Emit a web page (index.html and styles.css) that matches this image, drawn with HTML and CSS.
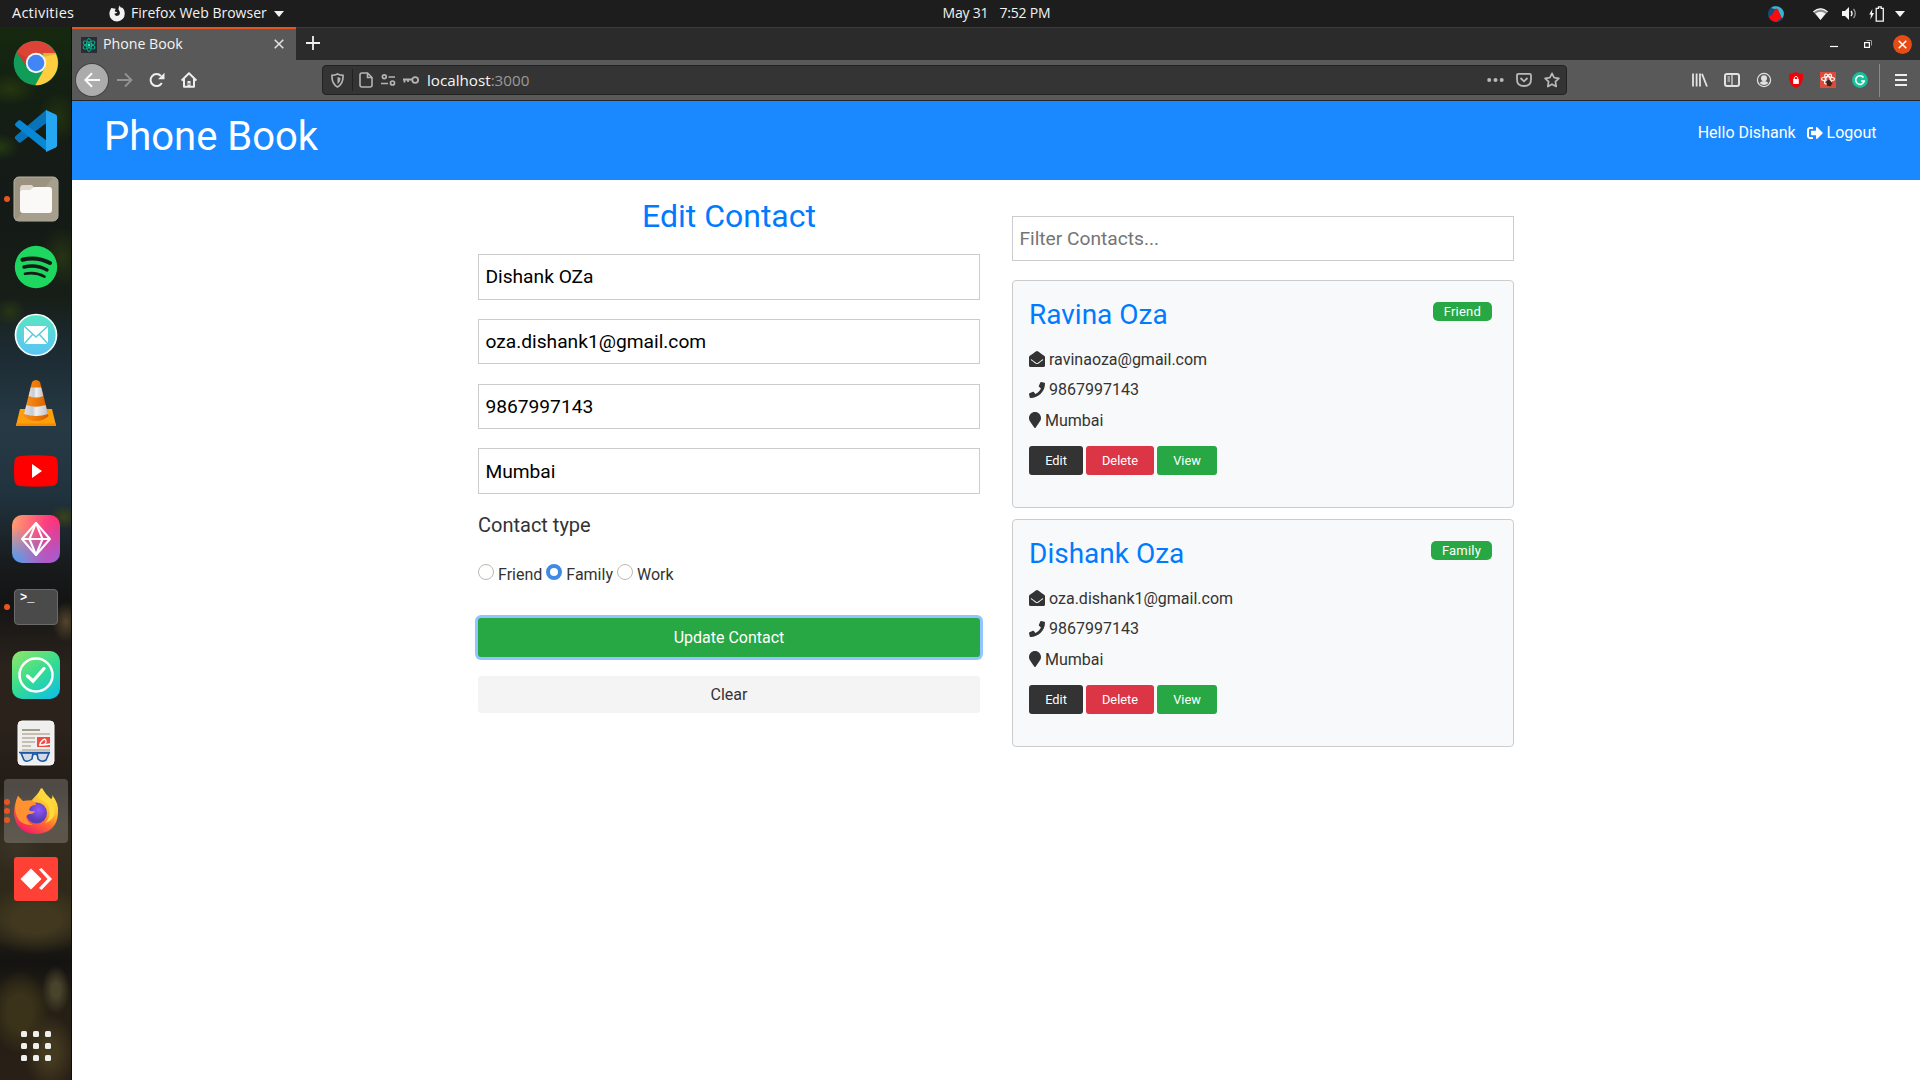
FILE: index.html
```html
<!DOCTYPE html>
<html lang="en">
<head>
<meta charset="utf-8">
<title>Phone Book</title>
<link rel="stylesheet" href="styles.css">
</head>
<body>
<svg class="defs" width="0" height="0" aria-hidden="true">
  <symbol id="i-mail" viewBox="0 0 512 512"><path d="M512 464c0 26.51-21.49 48-48 48H48c-26.51 0-48-21.49-48-48V200.724a48 48 0 0 1 18.387-37.776c24.913-19.529 45.501-35.365 164.2-121.511C199.412 29.17 232.797-.347 256 .003c23.198-.354 56.596 29.172 73.413 41.433 118.687 86.137 139.303 101.995 164.2 121.512A48 48 0 0 1 512 200.724V464zm-65.666-196.605c-2.563-3.728-7.7-4.595-11.339-1.907-22.845 16.873-55.462 40.705-105.582 77.079-16.825 12.266-50.21 41.781-73.413 41.43-23.211.344-56.559-29.143-73.413-41.43-50.114-36.37-82.734-60.204-105.582-77.079-3.639-2.688-8.776-1.821-11.339 1.907l-9.072 13.196a7.998 7.998 0 0 0 1.839 10.967c22.887 16.899 55.454 40.69 105.303 76.868 20.274 14.781 56.524 47.813 92.264 47.573 35.724.242 71.961-32.771 92.263-47.573 49.85-36.179 82.418-59.97 105.303-76.868a7.998 7.998 0 0 0 1.839-10.967l-9.071-13.196z"/></symbol>
  <symbol id="i-phone" viewBox="0 0 512 512"><path d="M493.4 24.6l-104-24c-11.3-2.6-22.9 3.3-27.5 13.9l-48 112c-4.2 9.8-1.4 21.3 6.9 28l60.6 49.6c-36 76.7-98.9 140.5-177.2 177.2l-49.6-60.6c-6.8-8.3-18.2-11.1-28-6.9l-112 48C3.9 366.5-2 378.1.6 389.4l24 104C27.1 504.2 36.7 512 48 512c256.1 0 464-207.5 464-464 0-11.2-7.7-20.9-18.6-23.4z"/></symbol>
  <symbol id="i-pin" viewBox="0 0 384 512"><path d="M172.268 501.67C26.97 291.031 0 269.413 0 192 0 85.961 85.961 0 192 0s192 85.961 192 192c0 77.413-26.97 99.031-172.268 309.67-9.535 13.774-29.93 13.773-39.464 0z"/></symbol>
</svg>

<div class="topbar">
  <div class="topbar-left">
    <span class="activities">Activities</span>
    <svg class="ff-mono" width="16" height="17" viewBox="0 0 16 17"><path fill="#f2f2f2" fill-rule="evenodd" d="M2.2 3.2c.9-.6 1.500.1 2.400.3C5.600 3.300 6.300 3.700 7 4c-1.300.8-1.500 2-.8 2.600.5.500 1.500.3 2 .8-.7 1-2 .8-2.700 1.400.3 1.600 1.700 2.400 3.100 2 1.800-.5 2.600-2 2.200-3.700-.3-1.300-1.400-1.800-1.300-3.200.1-1.300.6-2.500 1.300-3.300.3 1.400 1.100 2 1.600 2.700.2-.4.2-.9.1-1.300 2.200 1.500 3.200 3.900 3.200 6.300A7.600 7.600 0 0 1 8 16.500a7.600 7.600 0 0 1-7.600-7.700C.4 6.600 1.300 4.900 2.200 3.200z"/></svg>
    <span class="app-name">Firefox Web Browser</span>
    <svg width="10" height="6" viewBox="0 0 10 6"><path d="M0 0h10L5 6z" fill="#f2f2f2"/></svg>
  </div>
  <div class="clock"><span>May 31</span><span>7:52 PM</span></div>
  <div class="tray">
    <svg class="tray-app" width="16" height="16" viewBox="0 0 16 16"><circle cx="8" cy="8" r="8" fill="#174b78"/><path d="M3 2a8 8 0 0 1 12.800 4.500c.3 2.500-.5 4.500-1.800 6L10 4z" fill="#37b6ce"/><path d="M7.500 2.500c2-.2 3 1 3 2.500l2.500 5.500c.5 2-1 3-2.500 3.500L9 16c-3 0-6.500-1.500-8-5.500l3-1.500z" fill="#f90b10"/></svg>
    <svg class="wifi" width="15" height="12" viewBox="0 0 15 12"><path d="M0 3.400Q7.500-2.800 15 3.400L7.500 12z" fill="#8d8d8d"/><path d="M0 3.400Q7.500-2.800 15 3.400l-.7.8Q7.500-1 .7 4.200z" fill="#f5f5f5"/><path d="M2.400 5.600Q7.500 1.800 12.600 5.600L7.500 12z" fill="#f5f5f5"/></svg>
    <svg class="sound" width="15" height="13" viewBox="0 0 15 13"><path d="M0 4h3l4-4v13L3 9H0z" fill="#f5f5f5"/><path d="M9 4q2 2.500 0 5" fill="none" stroke="#f5f5f5" stroke-width="1.400"/><path d="M11.500 2q3.500 4.500 0 9" fill="none" stroke="#999" stroke-width="1.300"/></svg>
    <svg class="battery" width="15" height="16" viewBox="0 0 15 16"><path d="M7.200 2.300h2.300V.8h2.700v1.500h2.100v12.900H7.200z" fill="none" stroke="#f5f5f5" stroke-width="1.300"/><path d="M3.400 3L.2 8.600h1.800l-.6 4.800L5 7H3z" fill="#f5f5f5"/></svg>
    <svg width="10" height="6" viewBox="0 0 10 6"><path d="M0 0h10L5 6z" fill="#f2f2f2"/></svg>
  </div>
</div>

<div class="desktop">
  <nav class="dock">
    <div class="dock-item"><svg width="46" height="46" viewBox="0 0 46 46"><circle cx="23" cy="23" r="22.300" fill="#119d58"/><path d="M3.500 12A22.300 22.300 0 0 1 42.500 13H23a10 10 0 0 0-9.500 13z" fill="#dd4437"/><path d="M42.500 13A22.300 22.300 0 0 1 22.300 45.300L32 27.500 30 13z" fill="#ffcd40"/><path d="M4 12l10 16 2-9z" fill="#a52b22" opacity=".3"/><path d="M22 13h20.500l.6 1.300L30 17z" fill="#c58a2b" opacity=".4"/><circle cx="23" cy="23" r="10.200" fill="#f4f4f4"/><circle cx="23" cy="23" r="8.300" fill="#4286f5"/></svg></div>
    <div class="dock-item"><svg width="44" height="44" viewBox="0 0 44 44"><path d="M1 29.500l4.500 3.800L33 13.500V1z" fill="#0069b3"/><path d="M1 29.500q-.7-1.500.6-2.500L32 1v13L6.500 33.500q-1 .5-2-.3z" fill="#0873b8"/><path d="M1.300 14.500l3.200-3q1-.8 2 0L33 32v10.500L1.600 17q-1-1.200-.3-2.500z" fill="#0887d4"/><path d="M32 1l9.800 4.600q1.200.7 1.200 2v28.800q0 1.300-1.200 2L32 43z" fill="#25a7f1"/></svg></div>
    <div class="dock-item"><i class="run"></i><svg width="46" height="46" viewBox="0 0 46 46"><rect x="1" y="1" width="44" height="44" rx="5" fill="#9b927f" stroke="#b9b3a5"/><path d="M2 45L40 2h4v42z" fill="#a79f8d"/><path d="M7 13q0-4 3-4h9l3 4v6H7z" fill="#ded9ce"/><path d="M7 17q0-3 3-3h7l4-3h15q3 0 3 3v20q0 3-3 3H10q-3 0-3-3z" fill="#faf9f8"/></svg></div>
    <div class="dock-item"><svg width="44" height="44" viewBox="0 0 44 44"><circle cx="22" cy="22" r="21.200" fill="#1ed760"/><g fill="none" stroke="#171b17" stroke-linecap="round"><path d="M8.500 14.700q14.500-3.700 27.500 3.300" stroke-width="4"/><path d="M10 22q12.500-3 23 3" stroke-width="3.400"/><path d="M11 28.800q10.500-2.300 19.500 2.800" stroke-width="2.700"/></g></svg></div>
    <div class="dock-item"><svg width="44" height="44" viewBox="0 0 44 44"><defs><linearGradient id="gm" x2="0" y2="1"><stop stop-color="#58e6c4"/><stop offset="1" stop-color="#5ac3f6"/></linearGradient></defs><circle cx="22" cy="22" r="20.500" fill="url(#gm)" stroke="#f6fbfb" stroke-width="1.700"/><path d="M10 13h24v18H10z" fill="#fff"/><path d="M10 13l12 11 12-11M10 31l9-10M34 31l-9-10" fill="none" stroke="#59cbdc" stroke-width="1.500"/></svg></div>
    <div class="dock-item"><svg width="44" height="48" viewBox="0 0 44 48"><defs><linearGradient id="gv"><stop stop-color="#f39227"/><stop offset=".5" stop-color="#ee7a08"/><stop offset="1" stop-color="#d35c02"/></linearGradient><linearGradient id="gw"><stop stop-color="#dfe1e4"/><stop offset=".35" stop-color="#c8ccd0"/><stop offset=".5" stop-color="#f1f1f1"/><stop offset="1" stop-color="#bfc2c5"/></linearGradient></defs><path d="M6 30h32l4 16.500H2z" fill="#ffa008"/><path d="M2 44.500h40V47H2z" fill="#f78803"/><path d="M18 3q4-4 8 0l8.500 34q-5 5-12.500 5T9.500 37z" fill="url(#gv)"/><path d="M16.800 8.500h10.400l2.100 8.500q-7 3-14.600 0z" fill="url(#gw)"/><path d="M12.400 26q9 3.500 19.200 0l2.400 9q-12 4-24 0z" fill="url(#gw)"/></svg></div>
    <div class="dock-item"><svg width="44" height="32" viewBox="0 0 44 32"><path d="M6 1q16-1.500 32 0 5 .3 5.500 5 1 10 0 20-.5 4.500-5.500 5-16 1.500-32 0-5-.5-5.500-5-1-10 0-20Q1 1.300 6 1z" fill="#f00"/><path d="M18 9l10 7-10 7z" fill="#fff"/></svg></div>
    <div class="dock-item"><div class="tile tile-gem"><svg width="32" height="36" viewBox="0 0 32 36"><g fill="none" stroke="#fff" stroke-width="2" stroke-linejoin="round"><path d="M16 2l14 16-14 16L2 18z"/><path d="M2 18h28M16 2L9.500 18 16 34l6.500-16z"/></g></svg></div></div>
    <div class="dock-item"><i class="run"></i><div class="tile-term">&gt;_</div></div>
    <div class="dock-item"><div class="tile tile-check"><svg width="38" height="38" viewBox="0 0 38 38"><circle cx="19" cy="19" r="16.500" fill="none" stroke="#fff" stroke-width="2.500"/><path d="M10.500 20l5.500 5 11-12.500" fill="none" stroke="#fff" stroke-width="3.400" stroke-linecap="round"/></svg></div></div>
    <div class="dock-item"><svg width="38" height="46" viewBox="0 0 38 46"><rect x="1" y="1" width="36" height="44" rx="4" fill="#efeff0" stroke="#fafafa"/><path d="M5 10h18" stroke="#a59c86" stroke-width="2"/><path d="M5 14h28M5 18h13M5 22h13M5 26h9M5 30h28" stroke="#c5bfb1" stroke-width="2"/><path d="M20 17h13v10H20z" fill="#f04a43"/><path d="M22 25q8 0 7-4t-5 1 9 2" fill="none" stroke="#fff" stroke-width="1.300"/><g fill="#d3dbe7" stroke="#1c58a6" stroke-width="1.600"><path d="M4 33h12l-1 6q-5 4-8 1zM20 33h12l-3 7q-4 3-8-1z"/><path d="M2 32.500h31M16 35q2-2 4 0" fill="none"/></g></svg></div>
    <div class="dock-item dock-active"><i class="run"></i><i class="run run-up"></i><i class="run run-down"></i><svg width="46" height="48" viewBox="0 0 46 48"><defs><linearGradient id="gf" x1=".8" y1="0" x2=".2" y2="1"><stop stop-color="#fff04a"/><stop offset=".35" stop-color="#ffbd2c"/><stop offset=".6" stop-color="#ff6d30"/><stop offset="1" stop-color="#f2106f"/></linearGradient><radialGradient id="gp" cx=".6" cy=".35"><stop stop-color="#9059ff"/><stop offset="1" stop-color="#5b3db5"/></radialGradient></defs><path d="M5 9l5 5q4-1 7 1Q24 8 29 1q3 6 9 11 2-1 1-4 7 8 6 18-1 20-22 21Q3 46 1 27q0-10 4-18z" fill="url(#gf)"/><circle cx="23.500" cy="26" r="10.500" fill="url(#gp)"/><path d="M5 9l5 6q5-3 10-1 3 2 3 4-6 0-7 5 2 2 6 1-1 3-5 3-3 0-4 3 1 5 7 8Q9 39 4 30q-4-10 1-21z" fill="#ff9130"/><path d="M28 1q-4 7-2 11 8 2 10 9 2 10-4 15 13-4 9-20Q36 12 28 1z" fill="#ffd83a"/></svg></div>
    <div class="dock-item"><svg width="44" height="44" viewBox="0 0 44 44"><rect width="44" height="44" rx="3" fill="#ff4135"/><path d="M17 11.500L27.500 22 17 32.500 6.500 22z" fill="#fff"/><path d="M25 12.500l2.500-1.500L38 22 27.500 33 25 31l8.500-9z" fill="#fff"/></svg></div>
    <div class="dock-grid"><i></i><i></i><i></i><i></i><i></i><i></i><i></i><i></i><i></i></div>
  </nav>

  <div class="window">
    <div class="tabstrip">
      <div class="tab">
        <svg width="16" height="16" viewBox="0 0 16 16"><path fill="#2a2c38" d="M0 0h16v16H0z"/><g fill="none" stroke="#00b88b"><ellipse cx="8" cy="8" rx="2.500" ry="6.500"/><ellipse cx="8" cy="8" rx="2.500" ry="6.500" transform="rotate(60 8 8)"/><ellipse cx="8" cy="8" rx="2.500" ry="6.500" transform="rotate(120 8 8)"/></g><circle cx="8" cy="8" r="1.500" fill="#2be8b6"/></svg>
        <span class="tab-title">Phone Book</span>
        <svg class="tab-close" width="10" height="10" viewBox="0 0 10 10"><path d="M.7.7l8.600 8.600M9.300.7L.7 9.300" stroke="#e0e0e0" stroke-width="1.600"/></svg>
      </div>
      <svg class="new-tab" width="14" height="14" viewBox="0 0 14 14"><path d="M7 0v14M0 7h14" stroke="#f0f0f0" stroke-width="1.800"/></svg>
      <div class="win-controls">
        <svg width="8" height="10" viewBox="0 0 8 10"><path d="M0 7.500h8" stroke="#fff" stroke-width="1.200"/></svg>
        <svg width="8" height="8" viewBox="0 0 8 8"><path d="M.6 2.600h4.800v4.800H.6z" fill="none" stroke="#fff" stroke-width="1.200"/><path d="M2.500.5h5v5" fill="none" stroke="#999"/></svg>
        <svg width="19" height="19" viewBox="0 0 19 19"><circle cx="9.500" cy="9.500" r="9.400" fill="#e44d18"/><path d="M5.700 5.700l7.600 7.600M13.300 5.700l-7.600 7.600" stroke="#fff" stroke-width="1.500"/></svg>
      </div>
    </div>

    <div class="toolbar">
      <div class="nav-buttons">
        <div class="back"><svg width="16" height="16" viewBox="0 0 16 16"><path d="M16 8H1.500M8 1.300L1.300 8 8 14.700" fill="none" stroke="#fafafa" stroke-width="2"/></svg></div>
        <svg width="16" height="16" viewBox="0 0 16 16"><path d="M0 8h14.500M8 1.500L14.500 8 8 14.500" fill="none" stroke="#939393" stroke-width="1.800"/></svg>
        <svg width="16" height="16" viewBox="0 0 16 16"><path d="M12.800 11A6 6 0 1 1 12 4" fill="none" stroke="#eee" stroke-width="2"/><path d="M15.500.8v6.500H9z" fill="#eee"/></svg>
        <svg width="16" height="16" viewBox="0 0 16 16"><path d="M.6 8.500L8 1.300l7.400 7.200M3 7v7.700h10V7" fill="none" stroke="#eee" stroke-width="2" stroke-linejoin="round"/><path d="M6.500 9h3v5h-3z" fill="#eee"/><path d="M8 11v2" stroke="#555"/></svg>
      </div>
      <div class="urlbar">
        <svg class="shield" width="13" height="15" viewBox="0 0 13 15"><path d="M6.500 1Q9 2.300 12 2.300 12.500 11 6.500 14 .500 11 1 2.300 4 2.300 6.500 1z" fill="none" stroke="#b4b4b4" stroke-width="1.700"/><path d="M6.500 4v7q3-2.200 3-6z" fill="#b4b4b4"/></svg>
        <span class="url-sep"></span>
        <svg class="u-page" width="14" height="16" viewBox="0 0 14 16"><path d="M3 1h5.500L13 5.500V13q0 2-2 2H3q-2 0-2-2V3q0-2 2-2zM8.500 1v4.500H13" fill="none" stroke="#b4b4b4" stroke-width="1.600"/></svg>
        <svg class="u-perm" width="15" height="12" viewBox="0 0 15 12"><g fill="none" stroke="#b4b4b4" stroke-width="1.700"><circle cx="3.300" cy="2.800" r="1.900"/><path d="M7.500 3H14M0 9.500h7"/><circle cx="11.500" cy="9" r="2"/></g></svg>
        <svg class="u-key" width="16" height="8" viewBox="0 0 16 8"><g fill="none" stroke="#b4b4b4" stroke-width="1.800"><circle cx="12.200" cy="4" r="2.900"/><path d="M9.500 3.500H0M1.500 3.500v3M5 3.500v2.500"/></g></svg>
        <span class="url">localhost<em>:3000</em></span>
        <div class="url-actions">
          <svg width="17" height="16" viewBox="0 0 17 16"><g fill="#b9b9b9"><circle cx="2.200" cy="8" r="2"/><circle cx="8.500" cy="8" r="2"/><circle cx="14.700" cy="8" r="2"/></g></svg>
          <svg width="16" height="16" viewBox="0 0 16 16"><path d="M2.500 1.800h11q1.500 0 1.500 1.500v4.200q0 6.500-7 6.500t-7-6.500V3.300q0-1.500 1.500-1.500zM4.500 6L8 9.300 11.500 6" fill="none" stroke="#b9b9b9" stroke-width="1.800"/></svg>
          <svg width="16" height="16" viewBox="0 0 16 16"><path d="M8 1.300l2.100 4.300 4.800.7-3.500 3.400.8 4.800L8 12.200l-4.200 2.300.8-4.800L1.100 6.300l4.800-.7z" fill="none" stroke="#b9b9b9" stroke-width="1.700" stroke-linejoin="round"/></svg>
        </div>
      </div>
      <div class="ext">
        <svg width="16" height="16" viewBox="0 0 16 16"><path d="M1 1.500v13M4.600 1.500v13M8 1.500v13M10 1.800l5 12.700" stroke="#e2e2e2" stroke-width="1.800"/></svg>
        <svg width="16" height="16" viewBox="0 0 16 16"><rect x="1" y="2" width="14" height="12" rx="2" fill="none" stroke="#e2e2e2" stroke-width="2"/><path d="M8 2v12M3.500 5H6M3.500 7H6M3.500 9H6" stroke="#e2e2e2" stroke-width="1.200"/></svg>
        <svg width="16" height="16" viewBox="0 0 16 16"><circle cx="8" cy="8" r="6.600" fill="none" stroke="#e2e2e2" stroke-width="1.200"/><circle cx="8" cy="6.300" r="3" fill="#e2e2e2"/><path d="M3.500 11q2-2 4.500-2t4.500 2Q8 15 3.500 11z" fill="#e2e2e2"/></svg>
        <svg width="16" height="16" viewBox="0 0 16 16"><path d="M8 0q3 2 7 2 .7 11.500-7 14Q.3 13.500 1 2q4 0 7-2z" fill="#f00007"/><path d="M5.200 7h5.600v5H5.200z" fill="#fff"/><path d="M6.300 7V5.500Q8 3 9.700 5.500V7" fill="none" stroke="#fff"/></svg>
        <svg width="16" height="16" viewBox="0 0 16 16"><path d="M0 0h16v16H0z" fill="#dd4b3a"/><g fill="none" stroke="#fff" stroke-width="1.100"><ellipse cx="8" cy="7" rx="2.200" ry="5.500" transform="rotate(30 8 7)"/><ellipse cx="8" cy="7" rx="2.200" ry="5.500" transform="rotate(-30 8 7)"/><ellipse cx="8" cy="7" rx="6.500" ry="2.200"/></g><path d="M6 9l3-1.500 3.500 3.500-2 3.500-3.500-1z" fill="#39231d"/></svg>
        <svg width="16" height="16" viewBox="0 0 16 16"><circle cx="8" cy="8" r="7.900" fill="#15c39a"/><path d="M11.500 5.500A4.300 4.300 0 1 0 12.200 9H9" fill="none" stroke="#fff" stroke-width="1.600"/></svg>
        <span class="ext-sep"></span>
        <svg class="menu" width="12" height="12" viewBox="0 0 12 12"><path d="M0 1h12M0 6h12M0 11h12" stroke="#eee" stroke-width="1.900"/></svg>
      </div>
    </div>

    <header class="navbar">
      <h1>Phone Book</h1>
      <ul>
        <li>Hello Dishank</li>
        <li class="logout"><svg width="16" height="16" viewBox="0 0 512 512"><path fill="#fff" d="M497 273L329 441c-15 15-41 4.500-41-17v-96H152c-13.300 0-24-10.700-24-24v-96c0-13.300 10.700-24 24-24h136V88c0-21.400 25.900-32 41-17l168 168c9.300 9.400 9.300 24.600 0 34zM192 436v-40c0-6.600-5.400-12-12-12H96c-17.700 0-32-14.300-32-32V160c0-17.700 14.300-32 32-32h84c6.600 0 12-5.400 12-12V76c0-6.600-5.400-12-12-12H96c-53 0-96 43-96 96v192c0 53 43 96 96 96h84c6.600 0 12-5.400 12-12z"/></svg>Logout</li>
      </ul>
    </header>

    <main class="container">
      <form class="contact-form">
        <h2>Edit Contact</h2>
        <input class="field" type="text" value="Dishank OZa">
        <input class="field" type="text" value="oza.dishank1@gmail.com">
        <input class="field" type="text" value="9867997143">
        <input class="field" type="text" value="Mumbai">
        <h5>Contact type</h5>
        <div class="radios">
          <span class="radio"></span><label>Friend</label>
          <span class="radio checked"></span><label>Family</label>
          <span class="radio"></span><label>Work</label>
        </div>
        <button type="button" class="btn-update">Update Contact</button>
        <button type="button" class="btn-clear">Clear</button>
      </form>

      <section class="contacts">
        <input class="field" type="text" placeholder="Filter Contacts...">
        <article class="card">
          <div class="card-head"><h3>Ravina Oza</h3><span class="badge">Friend</span></div>
          <ul>
            <li><svg width="16" height="16"><use href="#i-mail"/></svg>ravinaoza@gmail.com</li>
            <li><svg width="16" height="16"><use href="#i-phone"/></svg>9867997143</li>
            <li><svg width="12" height="16"><use href="#i-pin"/></svg>Mumbai</li>
          </ul>
          <div class="actions"><button class="dark">Edit</button><button class="danger">Delete</button><button class="success">View</button></div>
        </article>
        <article class="card">
          <div class="card-head"><h3>Dishank Oza</h3><span class="badge">Family</span></div>
          <ul>
            <li><svg width="16" height="16"><use href="#i-mail"/></svg>oza.dishank1@gmail.com</li>
            <li><svg width="16" height="16"><use href="#i-phone"/></svg>9867997143</li>
            <li><svg width="12" height="16"><use href="#i-pin"/></svg>Mumbai</li>
          </ul>
          <div class="actions"><button class="dark">Edit</button><button class="danger">Delete</button><button class="success">View</button></div>
        </article>
      </section>
    </main>
  </div>
</div>
</body>
</html>
```
FILE: styles.css
```css
* { box-sizing: border-box; }
body {
  margin: 0;
  width: 1920px;
  height: 1080px;
  overflow: hidden;
  display: flex;
  flex-direction: column;
  font-family: Roboto, sans-serif;
  font-size: 16px;
  color: #333;
  background: #fff;
}
h1, h2, h3, h5, ul { margin: 0; padding: 0; font-weight: 400; list-style: none; }
svg { display: block; flex: none; }
button { font-family: inherit; border: 0; padding: 0; cursor: pointer; }
.defs { position: absolute; }

/* Desktop panel */
.topbar {
  flex: none;
  height: 27px;
  display: grid;
  grid-template-columns: 1fr auto 1fr;
  align-items: center;
  background: #1d1d1d;
  color: #f2f2f2;
  font: 14px/25px "Open Sans", "Noto Sans", sans-serif;
}
.topbar-left { display: flex; align-items: center; padding-left: 12px; }
.activities, .app-name { padding-bottom: 2px; }
.activities { width: 97px; font-size: 14.5px; letter-spacing: 0.25px; }
.app-name { width: 138px; margin: 0 5px 0 6px; white-space: nowrap; letter-spacing: 0; }
.clock { display: flex; gap: 11px; padding: 0 0 2px 73px; letter-spacing: -0.2px; }
.tray { display: flex; align-items: center; justify-content: flex-end; padding-right: 15px; }
.tray-app { margin-right: 29px; }
.wifi { margin-right: 14px; }
.sound { margin-right: 12px; }
.battery { margin-right: 11px; }

.desktop { flex: 1; display: flex; min-height: 0; }

/* Dock */
.dock {
  flex: none;
  width: 72px;
  padding-top: 4px;
  display: flex;
  flex-direction: column;
  border-right: 1px solid #0c0f0c;
  background:
    radial-gradient(28px 16px at 10px 62px, #25360f, transparent),
    radial-gradient(20px 26px at 58px 90px, #22330f, transparent),
    radial-gradient(20px 14px at 0 120px, #223a12, transparent),
    radial-gradient(22px 30px at 62px 230px, #263414, transparent),
    radial-gradient(16px 14px at 10px 285px, #273514, transparent),
    radial-gradient(14px 12px at 64px 490px, #3a4218, transparent),
    radial-gradient(14px 20px at 66px 595px, #54452c, transparent),
    radial-gradient(30px 26px at 16px 820px, #3a3426, transparent),
    radial-gradient(60px 34px at 36px 893px, #41381f 40%, transparent),
    radial-gradient(14px 24px at 56px 963px, #48432b 30%, transparent),
    radial-gradient(30px 42px at 20px 985px, #3b3319 40%, transparent),
    radial-gradient(26px 38px at 50px 1025px, #43391f 30%, transparent),
    linear-gradient(#16290f 0, #132012 60px, #151b15 120px, #141a15 190px, #171e17 270px, #1c2a31 320px, #263a46 400px, #20323d 470px, #181a1b 540px, #141414 575px, #2a231c 640px, #2a221b 700px, #231d17 760px, #332c20 800px, #2e2818 880px, #141311 935px, #241f14 970px, #291f17 1053px);
}
.dock-item {
  position: relative;
  flex: none;
  width: 64px;
  height: 64px;
  margin: 0 0 4px 4px;
  display: flex;
  align-items: center;
  justify-content: center;
  border-radius: 4px;
}
.dock-active { background: rgba(255, 255, 255, 0.2); }
.run {
  position: absolute;
  left: 0;
  top: 29px;
  width: 6px;
  height: 6px;
  border-radius: 50%;
  background: #e95420;
}
.run-up { top: 20px; }
.run-down { top: 38px; }
.tile {
  width: 48px;
  height: 48px;
  border-radius: 10px;
  display: flex;
  align-items: center;
  justify-content: center;
}
.tile-gem { background: radial-gradient(circle at 0 100%, #3f9cff, transparent 55%), radial-gradient(circle at 100% 100%, #9a63e0, transparent 65%), linear-gradient(100deg, #ffa26f, #ff3b7e 65%, #fb2a73); }
.tile-check { background: linear-gradient(145deg, #93e667, #35dd8f 50%, #0bbcf0); }
.tile-term {
  width: 44px;
  height: 36px;
  padding: 1px 5px;
  border: 1px solid #6a6a6a;
  border-radius: 4px;
  background: #4a4a4a;
  color: #fff;
  font: bold 12px/14px "Liberation Mono", monospace;
}
.dock-grid {
  margin: 116px 0 0 21px;
  display: grid;
  grid-template-columns: repeat(3, 6px);
  gap: 6px;
}
.dock-grid i { height: 6px; border-radius: 1.5px; background: #efefed; }

/* Browser chrome */
.window { flex: 1; min-width: 0; background: #fff; }
.tabstrip {
  height: 33px;
  display: flex;
  background: #2b2b2b;
  border-top: 1px solid #3b3b3b;
  font: 14px/28px "Open Sans", "Noto Sans", sans-serif;
}
.tab {
  width: 224px;
  height: 33px;
  margin-top: -1px;
  padding: 0 12px 0 9px;
  display: flex;
  align-items: center;
  gap: 6px;
  border-top: 2px solid #e95420;
  background: #595959;
  color: #f4f4f4;
}
.tab-title { padding-bottom: 2px; font-size: 14.2px; letter-spacing: 0; }
.tab-close { margin: 0 0 2px auto; }
.new-tab { margin: 8px 0 0 10px; }
.win-controls { margin-left: auto; display: flex; align-items: center; padding-right: 8px; }
.win-controls svg { margin-left: 26px; }
.win-controls svg:last-child { margin-left: 21px; }
.tabstrip > :not(.tab) { align-self: flex-start; }
.win-controls { height: 32px; }
.toolbar {
  height: 41px;
  display: flex;
  align-items: center;
  padding: 0 13px 0 4px;
  background: #595959;
  border-bottom: 1px solid #262626;
}
.nav-buttons { display: flex; align-items: center; gap: 16px; width: 246px; }
.back {
  width: 32px;
  height: 32px;
  margin-right: -7px;
  display: flex;
  align-items: center;
  justify-content: center;
  border-radius: 50%;
  background: #acacac;
  box-shadow: 0 0 0 1px #444;
}
.urlbar {
  width: 1245px;
  height: 30px;
  display: flex;
  align-items: center;
  padding: 0 6px 0 8px;
  border: 1px solid #222;
  border-radius: 4px;
  background: #343434;
}
.url-sep { width: 1px; height: 22px; margin: 0 6px 0 8px; background: #222; }
.u-perm { margin-left: 8px; }
.u-key { margin-left: 7px; }
.url { margin-left: 8px; color: #f4f4f4; font: 15.2px/28px "Open Sans", "Noto Sans", sans-serif; }
.url em { font-style: normal; color: #9a9a9a; }
.url-actions { margin-left: auto; display: flex; gap: 12px; }
.ext { margin-left: auto; display: flex; align-items: center; gap: 16px; }
.ext-sep { width: 1px; height: 33px; margin: 0 -1px 0 -5px; background: #8a8a8a; }

/* Page */
.navbar {
  height: 79px;
  display: flex;
  align-items: flex-start;
  justify-content: space-between;
  padding: 12px 43.5px 0 32px;
  background: #1a88ff;
  border-bottom: 1px solid #28a745;
  color: #fff;
}
.navbar h1 { font-size: 40px; line-height: 48px; }
.navbar ul { display: flex; padding-top: 8px; line-height: 24px; }
.logout { display: flex; align-items: center; gap: 4px; margin-left: 11px; }

.container {
  width: 1100px;
  margin: 0 auto;
  padding: 16.4px 32px;
  display: grid;
  grid-template-columns: 1fr 1fr;
  gap: 32px;
}
.contact-form h2 { height: 38.4px; color: #007bff; font-size: 32px; line-height: 40.4px; text-align: center; }
.contact-form h5 { font-size: 20px; line-height: 24px; }
.field {
  display: block;
  width: 100%;
  height: 45.5px;
  margin: 19.2px 0;
  padding: 6.4px;
  border: 1px solid #ccc;
  background: #fff;
  color: #000;
  font: 19.2px/30.7px Roboto, sans-serif;
  outline: 0;
}
.contact-form .field { height: 45.6px; margin-bottom: 19.1px; }
.field::placeholder { color: #757575; opacity: 1; }
.radios { display: flex; align-items: center; height: 24px; margin-top: 25px; }
.radio {
  width: 16px;
  height: 16px;
  margin: 0 4px 4px 0;
  border: 1px solid #bfb8b1;
  border-radius: 50%;
  background: #fff;
}
.radios label { margin-right: 4px; padding-top: 1px; }
.radio.checked { border: 4px solid #3e8ae5; }
.btn-update, .btn-clear { display: block; width: 100%; border-radius: 3px; font-size: 16px; }
.btn-update {
  height: 39px;
  margin-top: 32px;
  background: #28a745;
  color: #fff;
  box-shadow: 0 0 0 3px #91c5ff;
}
.btn-clear { height: 37px; margin-top: 19px; background: #f4f4f4; color: #333; }

.card {
  height: 228px;
  margin-bottom: 11px;
  padding: 16px;
  border: 1px solid #ccc;
  border-radius: 4px;
  background: #f8f9fa;
}
.card-head { display: flex; justify-content: space-between; height: 34px; }
.card h3 { color: #007bff; font-size: 28px; line-height: 35px; }
.card:first-of-type h3 { line-height: 36px; }
.badge {
  height: 19px;
  margin: 5px 5px 0 0;
  padding: 0 11px;
  border-radius: 5px;
  background: #28a745;
  color: #fff;
  font-size: 13px;
  font-weight: 400;
  letter-spacing: 0.2px;
  line-height: 19px;
}
.card ul { margin-top: 13px; }
.card li { display: flex; align-items: center; gap: 4px; height: 30.4px; }
.card li svg { fill: #333; }
.actions { display: flex; gap: 3px; margin-top: 11px; }
.actions button { height: 29px; border-radius: 3px; color: #fff; font-size: 12.8px; }
.actions .dark { width: 54px; background: #333; }
.actions .danger { width: 68px; background: #dc3545; }
.actions .success { width: 60px; background: #28a745; }
```
